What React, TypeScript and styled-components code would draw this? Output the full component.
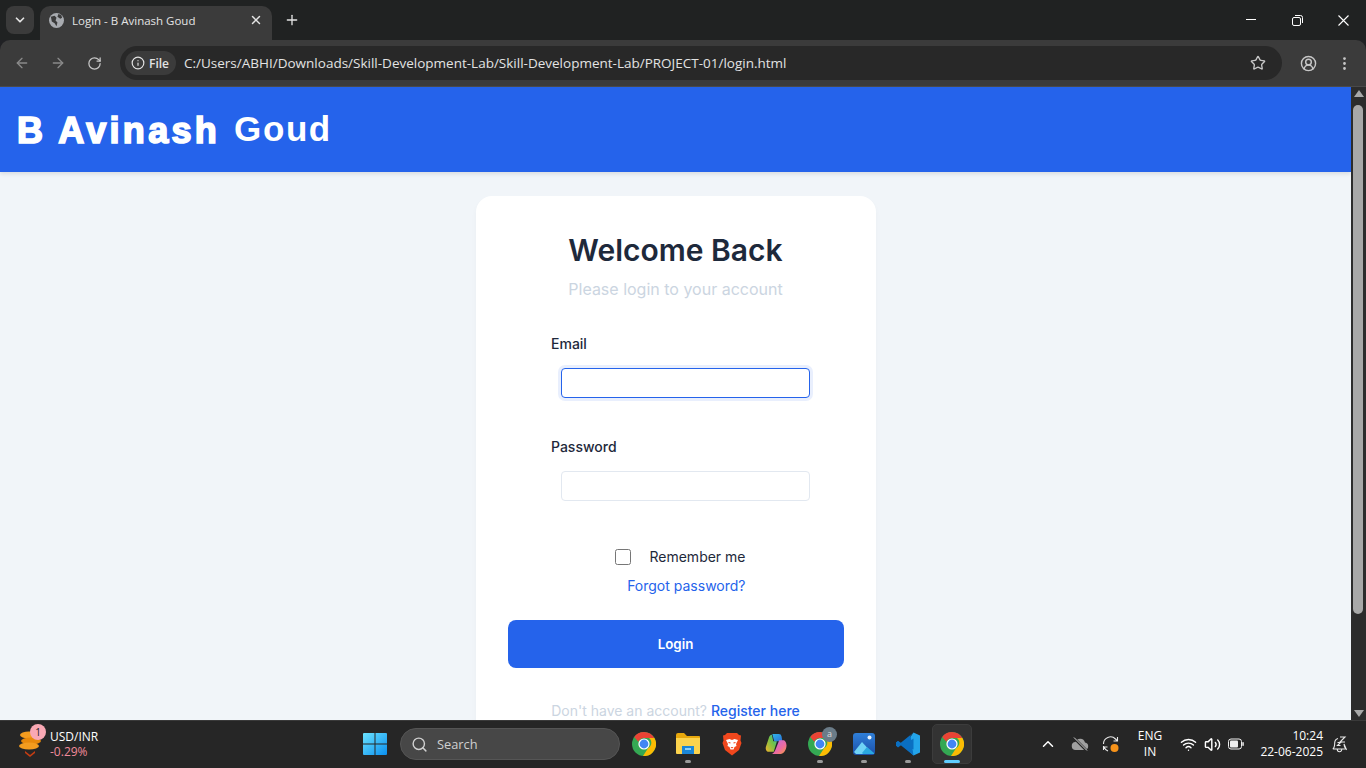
import React from 'react';
import styled, { createGlobalStyle } from 'styled-components';
import {
  ArrowLeft,
  ArrowRight,
  ChevronDown,
  ChevronUp,
  CircleUserRound,
  Info,
  MoreVertical,
  Plus,
  RotateCw,
  Search,
  Star,
  Volume2,
  Wifi,
  X,
} from 'lucide-react';

const GlobalStyle = createGlobalStyle`
  html, body {
    margin: 0;
    padding: 0;
    height: 100%;
    overflow: hidden;
    background: #202124;
  }
  * { box-sizing: border-box; }
`;

const Screen = styled.div`
  width: 1366px;
  height: 768px;
  display: flex;
  flex-direction: column;
  overflow: hidden;
  font-family: 'Open Sans', sans-serif;
`;

/* browser chrome */
const TabStrip = styled.div`
  height: 40px;
  flex: none;
  background: #202222;
  display: flex;
  align-items: flex-end;
  padding-left: 6px;
  color: #e3e3e3;
`;

const TabSearch = styled.div`
  width: 28px;
  height: 28px;
  margin-bottom: 6px;
  border-radius: 8px;
  background: #3b3b3b;
  display: flex;
  align-items: center;
  justify-content: center;
`;

const Tab = styled.div`
  width: 232px;
  height: 34px;
  margin-left: 6px;
  padding: 0 9px 6px 9px;
  background: #3b3b3b;
  border-radius: 10px 10px 0 0;
  display: flex;
  align-items: center;
  font-size: 11.5px;
  color: #e3e3e3;
`;

const TabTitle = styled.span`
  margin-left: 8px;
  flex: 1;
  white-space: nowrap;
`;

const NewTab = styled.div`
  margin: 0 0 7px 12px;
  height: 26px;
  display: flex;
  align-items: center;
`;

const WindowControls = styled.div`
  margin-left: auto;
  height: 40px;
  align-self: flex-start;
  display: flex;
  align-items: center;
`;

const WindowButton = styled.div`
  width: 46px;
  display: flex;
  justify-content: center;
  align-items: center;
`;

const Toolbar = styled.div`
  height: 47px;
  flex: none;
  background: #3b3b3b;
  border-bottom: 1px solid #4a4a4a;
  display: flex;
  align-items: center;
  padding: 0 0 0 4px;
  border-radius: 10px 10px 0 0;
`;

const NavButton = styled.div<{ $dim?: boolean }>`
  width: 36px;
  display: flex;
  justify-content: center;
  color: ${(p) => (p.$dim ? '#8a8a8a' : '#c7c7c7')};
`;

const Omnibox = styled.div`
  width: 1162px;
  height: 34px;
  margin-left: 8px;
  border-radius: 17px;
  background: #282828;
  display: flex;
  align-items: center;
  padding: 0 16px 0 5px;
`;

const SiteChip = styled.div`
  height: 24px;
  width: 51px;
  border-radius: 12px;
  background: #3b3b3b;
  display: flex;
  align-items: center;
  gap: 4px;
  padding-left: 6px;
  font-size: 12px;
  font-weight: 600;
  color: #e3e3e3;
  flex: none;
`;

const UrlText = styled.span`
  margin-left: 8px;
  flex: 1;
  font-size: 13.5px;
  color: #e3e3e3;
  white-space: nowrap;
`;

const ToolbarRight = styled.div`
  display: flex;
  align-items: center;
  margin-left: 8px;
  color: #c7c7c7;
`;

/* page */
const Viewport = styled.div`
  flex: 1;
  min-height: 0;
  display: flex;
  background: #f1f5f9;
`;

const Page = styled.div`
  flex: 1;
  min-width: 0;
  overflow: hidden;
  display: flex;
  flex-direction: column;
  font-family: Inter, sans-serif;
`;

const SiteHeader = styled.header`
  height: 85px;
  flex: none;
  background: #2563eb;
  padding: 0 17px;
  display: flex;
  align-items: center;
  box-shadow: 0 2px 4px rgba(0, 0, 0, 0.1);
  color: #fff;
  font-family: 'Liberation Sans', Arial, sans-serif;
`;

const LogoHeavy = styled.span`
  font-size: 36px;
  font-weight: 700;
  letter-spacing: 3.3px;
  -webkit-text-stroke: 1.7px #fff;
  margin-top: 2px;
`;

const LogoLight = styled.span`
  font-size: 35px;
  font-weight: 700;
  letter-spacing: 1.6px;
  margin: 0 0 2px 14px;
`;

const Card = styled.main`
  width: 400px;
  flex: none;
  margin: 24px auto 0;
  padding: 32px;
  background: #fff;
  border-radius: 16px;
  box-shadow: 0 4px 6px rgba(0, 0, 0, 0.03);
`;

const Title = styled.h1`
  margin: 0;
  text-align: center;
  font-size: 30px;
  line-height: 44px;
  font-weight: 600;
  color: #1e293b;
`;

const Subtitle = styled.p`
  margin: 7px 0 0;
  text-align: center;
  font-size: 16px;
  line-height: 20px;
  color: #cbd5e1;
`;

const Field = styled.div`
  padding: 0 43px 0 43.5px;
  margin-top: 39px;
  &:first-of-type {
    margin-top: 35px;
  }
`;

const Label = styled.label`
  display: block;
  font-size: 14px;
  line-height: 20px;
  font-weight: 500;
  color: #1e293b;
  margin-bottom: 14px;
`;

const Input = styled.input<{ $focused?: boolean }>`
  display: block;
  width: 249px;
  height: 30px;
  margin-left: 9.5px;
  padding: 0 8px;
  border-radius: 4px;
  background: #fff;
  outline: none;
  border: 1px solid ${(p) => (p.$focused ? '#2563eb' : '#e2e8f0')};
  box-shadow: ${(p) => (p.$focused ? '0 0 0 3px rgba(37, 99, 235, 0.1)' : 'none')};
`;

const RememberRow = styled.div`
  display: flex;
  align-items: center;
  justify-content: flex-end;
  margin: 45px 98px 0 0;
  height: 20px;
`;

const CheckBox = styled.span`
  width: 16px;
  height: 16px;
  margin: 1px 18px 0 0;
  border: 1px solid #767676;
  border-radius: 2.5px;
  background: #fff;
`;

const RememberText = styled.span`
  font-size: 14px;
  color: #1e293b;
`;

const ForgotRow = styled.div`
  margin: 10px 98px 0 0;
  text-align: right;
  font-size: 14px;
  line-height: 20px;
  color: #2563eb;
`;

const LoginButton = styled.button`
  display: block;
  width: 336px;
  height: 48px;
  margin-top: 24px;
  border: none;
  border-radius: 8px;
  background: #2563eb;
  color: #fff;
  font-family: Inter, sans-serif;
  font-size: 13.33px;
  font-weight: 600;
`;

const FooterLine = styled.p`
  margin: 33px 0 0;
  text-align: center;
  font-size: 14px;
  line-height: 20px;
  color: #cbd5e1;
`;

const RegisterLink = styled.span`
  color: #2563eb;
  font-weight: 500;
`;

const Scrollbar = styled.div`
  width: 15px;
  flex: none;
  background: #2c2c2c;
  display: flex;
  flex-direction: column;
  align-items: center;
  justify-content: space-between;
  padding: 3px 0 3px;
  position: relative;
`;

const ScrollArrow = styled.span<{ $down?: boolean }>`
  width: 0;
  height: 0;
  border-left: 5px solid transparent;
  border-right: 5px solid transparent;
  ${(p) =>
    p.$down ? 'border-top: 7px solid #a8a8a8;' : 'border-bottom: 7px solid #a8a8a8;'}
`;

const ScrollThumb = styled.span`
  position: absolute;
  top: 18px;
  left: 2px;
  width: 10px;
  height: 509px;
  border-radius: 5px;
  background: #a8a8a8;
`;

/* taskbar */
const Taskbar = styled.footer`
  height: 48px;
  flex: none;
  background: #262626;
  border-top: 1px solid #3a3a3a;
  display: flex;
  align-items: center;
  padding-bottom: 1px;
  color: #fff;
`;

const Widget = styled.div`
  width: 353px;
  flex: none;
  display: flex;
  align-items: center;
  padding-left: 18px;
  position: relative;
`;

const WidgetBadge = styled.span`
  position: absolute;
  left: 30px;
  top: -5px;
  width: 16px;
  height: 16px;
  border-radius: 50%;
  background: #f9a8b4;
  color: #222;
  font-size: 10px;
  line-height: 16px;
  text-align: center;
`;

const WidgetText = styled.div`
  margin: 0 0 1px 8px;
  font-size: 12px;
  line-height: 15px;
`;

const WidgetDelta = styled.div`
  color: #f28b9b;
`;

const StartButton = styled.div`
  width: 44px;
  height: 40px;
  display: flex;
  align-items: center;
  justify-content: center;
`;

const SearchBox = styled.div`
  width: 220px;
  height: 32px;
  margin: 0 2px 0 3px;
  border-radius: 16px;
  background: #474747;
  border: 1px solid #555;
  display: flex;
  align-items: center;
  gap: 9px;
  padding-left: 10px;
  font-size: 12.8px;
  color: #d0d0d0;
`;

const AppSlot = styled.div<{ $active?: boolean }>`
  width: 40px;
  height: 40px;
  margin: 0 2px;
  border-radius: 5px;
  display: flex;
  align-items: center;
  justify-content: center;
  position: relative;
  background: ${(p) => (p.$active ? '#333' : 'transparent')};
  border: 1px solid ${(p) => (p.$active ? '#3c3c3c' : 'transparent')};
`;

const RunDot = styled.span<{ $active?: boolean }>`
  position: absolute;
  bottom: 0;
  left: 50%;
  transform: translateX(-50%);
  height: 3px;
  border-radius: 2px;
  width: ${(p) => (p.$active ? '16px' : '6px')};
  background: ${(p) => (p.$active ? '#60cdff' : '#9a9a9a')};
`;

const AppBadge = styled.span`
  position: absolute;
  top: 2px;
  right: 2px;
  width: 15px;
  height: 15px;
  border-radius: 50%;
  background: #6b7c88;
  color: #ddd;
  font-size: 9px;
  line-height: 14px;
  text-align: center;
`;

const Tray = styled.div`
  margin-left: auto;
  display: flex;
  align-items: center;
  padding-right: 16px;
`;

const TrayIcon = styled.div<{ $w: number }>`
  width: ${(p) => p.$w}px;
  display: flex;
  justify-content: center;
  align-items: center;
  position: relative;
`;

const LangBlock = styled.div`
  width: 44px;
  margin: 0 4px 0 2px;
  text-align: center;
  font-size: 12px;
  line-height: 16px;
`;

const Clock = styled.div`
  width: 75px;
  margin-right: 5px;
  text-align: right;
  font-size: 12px;
  line-height: 16px;
`;

const ChromeIcon = ({ size = 24 }: { size?: number }) => (
  <svg width={size} height={size} viewBox="0 0 24 24">
    <circle cx="12" cy="12" r="12" fill="#34a853" />
    <path d="M12 0a12 12 0 0 1 10.4 6H12a6 6 0 0 0-5.6 3.7L2.2 5A12 12 0 0 1 12 0z" fill="#ea4335" />
    <path d="M22.4 6A12 12 0 0 1 11 24l5.2-8a6 6 0 0 0 .8-10z" fill="#fbbc04" />
    <circle cx="12" cy="12" r="5.6" fill="#fff" />
    <circle cx="12" cy="12" r="4.4" fill="#4285f4" />
  </svg>
);

const WindowsIcon = () => (
  <svg width="24" height="24" viewBox="0 0 24 24">
    <defs>
      <linearGradient id="win" x1="0" y1="0" x2="1" y2="1">
        <stop offset="0" stopColor="#6be3ff" />
        <stop offset="1" stopColor="#0a8fef" />
      </linearGradient>
    </defs>
    <path d="M1 1h10.5v10.5H0V2a1 1 0 0 1 1-1zM12.5 1H23a1 1 0 0 1 1 1v9.5H12.5zM0 12.5h11.5V23H1a1 1 0 0 1-1-1zM12.5 12.5H24V22a1 1 0 0 1-1 1H12.5z" fill="url(#win)" />
  </svg>
);

const FolderIcon = () => (
  <svg width="26" height="24" viewBox="0 0 26 24">
    <path d="M1 3a2 2 0 0 1 2-2h6l3 3h12a1 1 0 0 1 1 1v3H1z" fill="#e8a80c" />
    <path d="M1 6h24v15a1 1 0 0 1-1 1H2a1 1 0 0 1-1-1z" fill="#fcd34d" />
    <rect x="7" y="14" width="12" height="8" fill="#1b86d6" />
    <rect x="10" y="16" width="6" height="2" fill="#8fd0f7" />
  </svg>
);

const BraveIcon = () => (
  <svg width="20" height="24" viewBox="0 0 20 24">
    <path d="M5 1h10l2 2 2 .5-.5 5 1 2.500-2.500 7-7 5.500-7-5.500-2.500-7 1-2.500-.5-5L3 3z" fill="#f1471d" />
    <path d="M4 8l3.500-1 2.500 1 2.500-1L16 8l-2 4 .5 2-2 1-1 2.500h-3L7.500 15l-2-1 .5-2z" fill="#fff" />
    <path d="M6.500 10.500l2 .5M13.500 10.500l-2 .5" stroke="#f1471d" strokeWidth="1.200" />
    <path d="M8.500 15h3l-1.500 1.500z" fill="#f1471d" />
  </svg>
);

const CopilotIcon = () => (
  <svg width="22" height="22" viewBox="0 0 24 24">
    <defs>
      <linearGradient id="cpA" x1="0" y1="0" x2="1" y2="1">
        <stop offset="0" stopColor="#2fb6e8" />
        <stop offset="1" stopColor="#2b6fd8" />
      </linearGradient>
      <linearGradient id="cpB" x1="0" y1="1" x2="1" y2="0">
        <stop offset="0" stopColor="#f0b429" />
        <stop offset="0.6" stopColor="#6cc24a" />
        <stop offset="1" stopColor="#2fb6e8" />
      </linearGradient>
      <linearGradient id="cpC" x1="0" y1="0" x2="1" y2="1">
        <stop offset="0" stopColor="#b66ee8" />
        <stop offset="0.6" stopColor="#ee6ba0" />
        <stop offset="1" stopColor="#f59e3b" />
      </linearGradient>
    </defs>
    <path d="M8 1h7a3 3 0 0 1 3 2.500L19 9h-9z" fill="url(#cpA)" />
    <path d="M7.500 2C5.500 2 4.500 4 4 6L1 15c-.8 3 .8 5.500 3 5.500h5.500L13 9H9z" fill="url(#cpB)" />
    <path d="M15.500 8H20c2 0 3.500 3 3.500 6-.5 5-3 9-6.500 9H7c2.500-.8 3.500-2.500 4.500-5z" fill="url(#cpC)" />
  </svg>
);

const PhotosIcon = () => (
  <svg width="24" height="24" viewBox="0 0 24 24">
    <defs>
      <linearGradient id="ph" x1="0" y1="0" x2="0" y2="1">
        <stop offset="0" stopColor="#2f7fd8" />
        <stop offset="1" stopColor="#1b4fa8" />
      </linearGradient>
    </defs>
    <rect x="1" y="1" width="22" height="22" rx="3" fill="url(#ph)" />
    <circle cx="17.5" cy="5.5" r="2" fill="#e8f4ff" />
    <path d="M2 20l8-10 11 12H4z" fill="#6fd3f5" />
    <path d="M10 21l5-6 7 6v1H11z" fill="#2aa8e0" />
  </svg>
);

const VsCodeIcon = () => (
  <svg width="24" height="24" viewBox="0 0 24 24">
    <path d="M17.5 0.5L24 3.5v17l-6.5 3L7 13.5l4-3.5z" fill="#23a4ea" />
    <path d="M17.5 6.5v11L9.5 12zM17.5 23.5L4.5 13l-2.5 2L0 13.5V10.500l2-1.500 2.500 2L17.500 0.500l-3 3z" fill="#0a6fc2" />
    <path d="M0 10.500l2-1.500 4.500 3L2 15.500 0 13.500z" fill="#0a6fc2" />
  </svg>
);

const CoinsIcon = () => (
  <svg width="24" height="28" viewBox="0 0 24 28">
    <ellipse cx="11" cy="5" rx="9" ry="3.5" fill="#f39c1f" />
    <ellipse cx="13" cy="11" rx="10" ry="3.5" fill="#e8890c" />
    <ellipse cx="11" cy="16" rx="10" ry="3.5" fill="#f39c1f" />
    <path d="M7 21l5 4 5-4v2l-5 4-5-4z" fill="#c63d12" />
  </svg>
);

const GlobeFavicon = () => (
  <svg width="15" height="15" viewBox="0 0 16 16">
    <circle cx="8" cy="8" r="8" fill="#a8abb0" />
    <path d="M2 4l4-1 2 2-1 3 2 2-1 4-2-3-3-2zM10 1l3 1 1 3-2 1-3-2z" fill="#3b3b3b" />
  </svg>
);

const MinimizeIcon = () => (
  <svg width="10" height="10" viewBox="0 0 10 10" fill="none" stroke="#fff">
    <path d="M0 4.500h10" />
  </svg>
);

const RestoreIcon = () => (
  <svg width="11" height="11" viewBox="0 0 11 11" fill="none" stroke="#fff">
    <rect x="0.5" y="2.500" width="8" height="8" rx="1.500" />
    <path d="M3 .5h5.500a2 2 0 0 1 2 2V8" />
  </svg>
);

const CloseIcon = () => (
  <svg width="11" height="11" viewBox="0 0 11 11" fill="none" stroke="#fff" strokeWidth="1.100">
    <path d="M.5.500l10 10M10.500.500l-10 10" />
  </svg>
);

const CloudOffIcon = () => (
  <svg width="18" height="14" viewBox="0 0 18 14">
    <path d="M5 13a4 4 0 0 1-.5-8A5 5 0 0 1 14 5.500 3.800 3.800 0 0 1 14 13z" fill="#a0a0a0" />
    <path d="M3 1l12 12" stroke="#262626" strokeWidth="2.500" />
    <path d="M3 0.500l13 13" stroke="#d0d0d0" strokeWidth="1" />
  </svg>
);

const SyncIcon = () => (
  <svg width="18" height="20" viewBox="0 0 18 20" fill="none" stroke="#e8e8e8" strokeWidth="1.100">
    <path d="M1.500 10a7 7 0 0 1 12-5l2 2M15.500 3v4h-4" />
    <path d="M1.500 12v4M1.500 13l4 0M2 13a7 7 0 0 0 4 4" />
    <circle cx="12.500" cy="14" r="4" fill="#f7931a" stroke="none" />
  </svg>
);

const BatteryIcon = () => (
  <svg width="16" height="12" viewBox="0 0 16 12" fill="none">
    <rect x="0.500" y="1" width="13" height="10" rx="2.500" stroke="#f0f0f0" />
    <rect x="2" y="2.500" width="8" height="7" rx="1" fill="#f0f0f0" />
    <rect x="14.300" y="4" width="1.500" height="4" rx="0.700" fill="#f0f0f0" />
  </svg>
);

const BellSnoozeIcon = () => (
  <svg width="15" height="17" viewBox="0 0 15 17" fill="none" stroke="#e8e8e8" strokeWidth="1.100">
    <path d="M.8 13c1.700-1.200 1.900-3.500 1.900-6A4.800 4.800 0 0 1 6 2.500M12 8c0 2 .6 3.800 2.200 5zM.8 13h13.400M5.300 13.500a2.200 2.200 0 0 0 4.400 0" />
    <path d="M8 1h5l-5 5h5" />
    <path d="M5.500 6.500h3l-3 3h3" />
  </svg>
);

export default function App() {
  return (
    <Screen>
      <GlobalStyle />
      <TabStrip>
        <TabSearch>
          <ChevronDown size={14} strokeWidth={3} />
        </TabSearch>
        <Tab>
          <GlobeFavicon />
          <TabTitle>Login - B Avinash Goud</TabTitle>
          <X size={14} strokeWidth={2.5} />
        </Tab>
        <NewTab>
          <Plus size={16} strokeWidth={2} />
        </NewTab>
        <WindowControls>
          <WindowButton>
            <MinimizeIcon />
          </WindowButton>
          <WindowButton>
            <RestoreIcon />
          </WindowButton>
          <WindowButton>
            <CloseIcon />
          </WindowButton>
        </WindowControls>
      </TabStrip>

      <Toolbar>
        <NavButton $dim>
          <ArrowLeft size={16} />
        </NavButton>
        <NavButton $dim>
          <ArrowRight size={16} />
        </NavButton>
        <NavButton>
          <RotateCw size={15} />
        </NavButton>
        <Omnibox>
          <SiteChip>
            <Info size={14} />
            File
          </SiteChip>
          <UrlText>C:/Users/ABHI/Downloads/Skill-Development-Lab/Skill-Development-Lab/PROJECT-01/login.html</UrlText>
          <Star size={16} color="#c7c7c7" />
        </Omnibox>
        <ToolbarRight>
          <NavButton>
            <CircleUserRound size={17} />
          </NavButton>
          <NavButton>
            <MoreVertical size={17} />
          </NavButton>
        </ToolbarRight>
      </Toolbar>

      <Viewport>
        <Page>
          <SiteHeader>
            <LogoHeavy>B Avinash</LogoHeavy>
            <LogoLight>Goud</LogoLight>
          </SiteHeader>
          <Card>
            <Title>Welcome Back</Title>
            <Subtitle>Please login to your account</Subtitle>
            <Field>
              <Label>Email</Label>
              <Input $focused type="email" />
            </Field>
            <Field>
              <Label>Password</Label>
              <Input type="password" />
            </Field>
            <RememberRow>
              <CheckBox />
              <RememberText>Remember me</RememberText>
            </RememberRow>
            <ForgotRow>Forgot password?</ForgotRow>
            <LoginButton>Login</LoginButton>
            <FooterLine>
              Don't have an account? <RegisterLink>Register here</RegisterLink>
            </FooterLine>
          </Card>
        </Page>
        <Scrollbar>
          <ScrollArrow />
          <ScrollThumb />
          <ScrollArrow $down />
        </Scrollbar>
      </Viewport>

      <Taskbar>
        <Widget>
          <CoinsIcon />
          <WidgetBadge>1</WidgetBadge>
          <WidgetText>
            USD/INR
            <WidgetDelta>-0.29%</WidgetDelta>
          </WidgetText>
        </Widget>
        <StartButton>
          <WindowsIcon />
        </StartButton>
        <SearchBox>
          <Search size={17} />
          Search
        </SearchBox>
        <AppSlot>
          <ChromeIcon />
        </AppSlot>
        <AppSlot>
          <FolderIcon />
          <RunDot />
        </AppSlot>
        <AppSlot>
          <BraveIcon />
        </AppSlot>
        <AppSlot>
          <CopilotIcon />
        </AppSlot>
        <AppSlot>
          <ChromeIcon />
          <AppBadge>a</AppBadge>
          <RunDot />
        </AppSlot>
        <AppSlot>
          <PhotosIcon />
          <RunDot />
        </AppSlot>
        <AppSlot>
          <VsCodeIcon />
          <RunDot />
        </AppSlot>
        <AppSlot $active>
          <ChromeIcon />
          <RunDot $active />
        </AppSlot>
        <Tray>
          <TrayIcon $w={32}>
            <ChevronUp size={18} />
          </TrayIcon>
          <TrayIcon $w={32}>
            <CloudOffIcon />
          </TrayIcon>
          <TrayIcon $w={30}>
            <SyncIcon />
          </TrayIcon>
          <LangBlock>
            ENG
            <br />
            IN
          </LangBlock>
          <TrayIcon $w={24}>
            <Wifi size={17} />
          </TrayIcon>
          <TrayIcon $w={24}>
            <Volume2 size={17} />
          </TrayIcon>
          <TrayIcon $w={24}>
            <BatteryIcon />
          </TrayIcon>
          <Clock>
            10:24
            <br />
            22-06-2025
          </Clock>
          <TrayIcon $w={22}>
            <BellSnoozeIcon />
          </TrayIcon>
        </Tray>
      </Taskbar>
    </Screen>
  );
}
